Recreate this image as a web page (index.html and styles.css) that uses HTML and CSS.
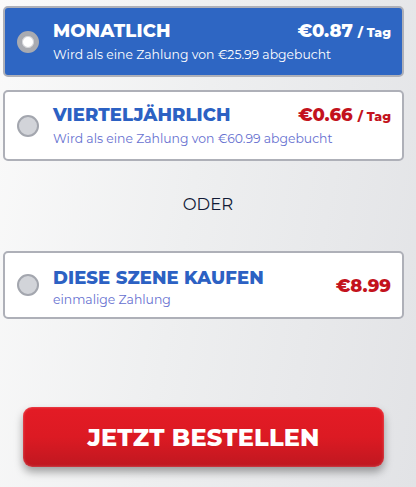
FILE: index.html
```html
<!DOCTYPE html>
<html lang="de">
<head>
<meta charset="utf-8">
<link rel="stylesheet" href="styles.css">
</head>
<body>
<div class="page">
  <div class="card selected">
    <span class="radio"></span>
    <div class="info">
      <div class="row">
        <span class="title">MONATLICH</span>
        <span class="price">€0.87<span class="per">/ Tag</span></span>
      </div>
      <div class="sub">Wird als eine Zahlung von €25.99 abgebucht</div>
    </div>
  </div>
  <div class="card quarter">
    <span class="radio"></span>
    <div class="info">
      <div class="row">
        <span class="title">VIERTELJÄHRLICH</span>
        <span class="price">€0.66<span class="per">/ Tag</span></span>
      </div>
      <div class="sub">Wird als eine Zahlung von €60.99 abgebucht</div>
    </div>
  </div>
  <div class="oder">ODER</div>
  <div class="card single">
    <span class="radio"></span>
    <div class="info">
      <div class="title">DIESE SZENE KAUFEN</div>
      <div class="sub">einmalige Zahlung</div>
    </div>
    <span class="price big">€8.99</span>
  </div>
  <button class="order">JETZT BESTELLEN</button>
</div>
</body>
</html>
```
FILE: styles.css
```css
html, body {
  margin: 0;
  padding: 0;
  height: 100%;
}
body {
  background: linear-gradient(100deg, #fafafa 0%, #eeeff0 45%, #e2e3e6 100%);
  font-family: "Montserrat", "Lato", "Liberation Sans", sans-serif;
}
.page {
  display: flex;
  flex-direction: column;
  padding: 6px 12px 0 3px;
}
.card {
  box-sizing: border-box;
  display: flex;
  align-items: center;
  border: 2px solid #aeb0b8;
  border-radius: 5px;
  background: #fff;
  padding: 0 11px 0 12px;
}
.card.selected {
  height: 71px;
  background: #2e66c3;
}
.card.quarter {
  height: 71px;
  margin-top: 13px;
}
.card.single {
  height: 68px;
}
.radio {
  box-sizing: border-box;
  flex: none;
  width: 22px;
  height: 22px;
  border-radius: 50%;
  background: #d2d4d9;
  border: 2px solid #a3a6ae;
  margin-right: 14px;
}
.selected .radio {
  background: #fff;
  border: 5px solid #a9abb1;
  box-shadow: inset 0 0 0 1px #d6d7da;
}
.info {
  flex: 1;
  display: flex;
  flex-direction: column;
}
.row {
  display: flex;
  justify-content: space-between;
  align-items: baseline;
}
.title {
  font-weight: 800;
  font-size: 18px;
  letter-spacing: 0.1px;
  color: #2c61c3;
  line-height: 22px;
}
.sub {
  font-size: 12.4px;
  color: #6670d0;
  margin-top: 3px;
  line-height: 16px;
}
.price {
  font-weight: 800;
  font-size: 18px;
  color: #c3131d;
  line-height: 22px;
}
.per {
  font-size: 12.5px;
  margin-left: 5px;
}
.selected .title, .selected .sub, .selected .price {
  color: #fff;
}
.oder {
  height: 90px;
  display: flex;
  align-items: center;
  justify-content: center;
  padding-bottom: 4px;
  box-sizing: border-box;
  font-size: 16.5px;
  color: #101a36;
  padding-left: 9px;
}
.single .title {
  margin-top: 4px;
}
.single .sub {
  margin-top: 3px;
}
.price.big {
  font-size: 18px;
  margin-top: 2px;
}
.order {
  align-self: flex-start;
  margin: 88px 0 0 20px;
  width: 361px;
  height: 60px;
  border: none;
  border-radius: 9px;
  background: linear-gradient(180deg, #e41b25 0%, #dc1a23 50%, #bf1720 100%);
  box-shadow: 0 5px 8px rgba(0,0,0,0.35), inset 0 0 3px rgba(255,255,255,0.35);
  color: #fff;
  font-family: "Montserrat", "Lato", sans-serif;
  font-weight: 800;
  font-size: 24px;
  letter-spacing: 0.2px;
  cursor: pointer;
}
```
